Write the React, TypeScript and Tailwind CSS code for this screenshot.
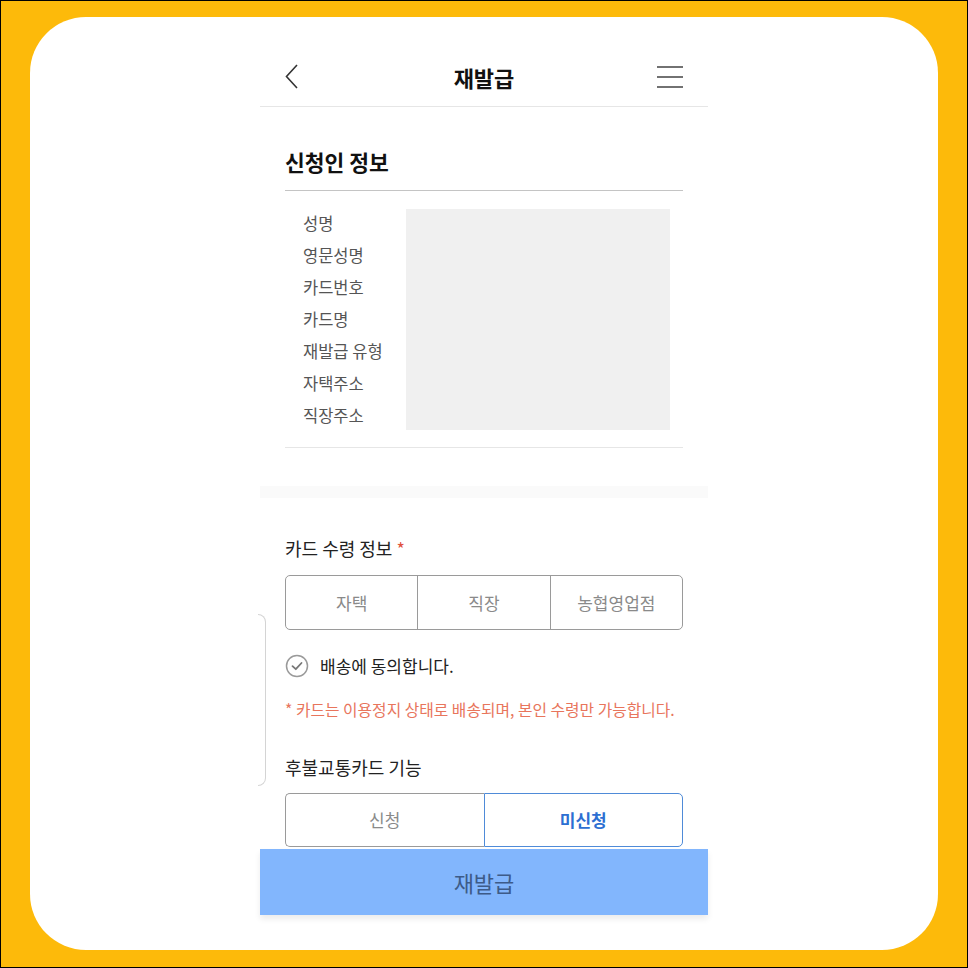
import React from 'react';

const font = { fontFamily: '"Noto Sans CJK KR", "Noto Sans", sans-serif' };

const labels = ['성명', '영문성명', '카드번호', '카드명', '재발급 유형', '자택주소', '직장주소'];

function BackIcon() {
  return (
    <svg width="14" height="26" viewBox="0 0 14 26" fill="none">
      <path d="M12 1 L1.5 12.5 L12 24" stroke="#333" strokeWidth="1.6" />
    </svg>
  );
}

function MenuIcon() {
  return (
    <svg width="26" height="24" viewBox="0 0 26 24" fill="none">
      <path d="M0 2h26M0 12h26M0 22h26" stroke="#444" strokeWidth="1.5" />
    </svg>
  );
}

function CheckCircle() {
  return (
    <svg width="24" height="24" viewBox="0 0 24 24" fill="none">
      <circle cx="12" cy="12" r="10.5" stroke="#9a9a9a" strokeWidth="1.5" />
      <path d="M7.5 12.2 L10.8 15.2 L16.5 9" stroke="#777" strokeWidth="1.8" strokeLinecap="round" strokeLinejoin="round" />
    </svg>
  );
}

export default function App() {
  return (
    <div className="w-[968px] h-[968px] bg-[#FDBA0A] border border-black" style={font}>
      <div className="relative ml-[29px] mt-[16px] w-[908px] h-[933px] bg-white rounded-[56px] pt-[30px]">
        {/* 좌측 폰 가장자리 */}
        <div className="absolute left-[228px] top-[597px] w-[8px] h-[172px] border-r border-t border-b border-[#d4d4d4] rounded-r-[8px]" />

        <div className="mx-auto w-[448px]">
          {/* 헤더 */}
          <div className="h-[60px] border-b border-[#e6e6e6] flex items-center px-[25px]">
            <div className="w-[26px] flex items-center">
              <BackIcon />
            </div>
            <div className="flex-1 text-center text-[22px] font-bold text-[#111] leading-none">재발급</div>
            <div className="w-[26px] flex items-center">
              <MenuIcon />
            </div>
          </div>

          {/* 신청인 정보 */}
          <div className="px-[25px]">
            <div className="mt-[41px] text-[21.5px] font-semibold text-[#111] leading-[28px]">신청인 정보</div>
            <div className="mt-[14px] h-px bg-[#c4c4c4]" />
            <div className="mt-[16px] flex pl-[18px] pr-[13px]">
              <div className="w-[103px] flex flex-col">
                {labels.map((l) => (
                  <div key={l} className="text-[16.5px] leading-[32px] text-[#555]">{l}</div>
                ))}
              </div>
              <div className="flex-1 mt-[2px] h-[221px] bg-[#f0f0f0]" />
            </div>
            <div className="mt-[16px] h-px bg-[#e6e6e6]" />
          </div>

          <div className="mt-[38px] h-[12px] bg-[#fafafa]" />

          {/* 카드 수령 정보 */}
          <div className="px-[25px]">
            <div className="mt-[37px] text-[18px] leading-[26px] text-[#222]">
              카드 수령 정보 <span className="text-[#e0503c]">*</span>
            </div>
            <div className="mt-[14px] h-[55px] flex border border-[#9a9a9a] rounded-[5px]">
              <div className="flex-1 flex items-center justify-center text-[17px] text-[#8a8a8a]">자택</div>
              <div className="flex-1 flex items-center justify-center text-[17px] text-[#8a8a8a] border-l border-[#9a9a9a]">직장</div>
              <div className="flex-1 flex items-center justify-center text-[17px] text-[#8a8a8a] border-l border-[#9a9a9a]">농협영업점</div>
            </div>

            <div className="mt-[24px] h-[24px] flex items-center gap-[11px]">
              <CheckCircle />
              <span className="text-[17px] text-[#222]">배송에 동의합니다.</span>
            </div>

            <div className="mt-[22px] text-[15.8px] leading-[20px] text-[#e8755c] whitespace-nowrap">
              * 카드는 이용정지 상태로 배송되며, 본인 수령만 가능합니다.
            </div>

            <div className="mt-[34px] text-[18px] leading-[26px] text-[#222]">후불교통카드 기능</div>
            <div className="mt-[13px] h-[54px] flex">
              <div className="flex-1 flex items-center justify-center text-[17px] text-[#8a8a8a] border border-r-0 border-[#9a9a9a] rounded-l-[5px]">신청</div>
              <div className="flex-1 flex items-center justify-center text-[17px] font-bold text-[#2d6fd2] border border-[#4f8bd8] rounded-r-[5px]">미신청</div>
            </div>
          </div>

          {/* 하단 버튼 */}
          <div className="mt-[2px] h-[66px] bg-[#82b6fd] flex items-center justify-center text-[22px] text-[#3d5b88] shadow-[0_4px_6px_rgba(0,0,0,0.08)]">
            재발급
          </div>
        </div>
      </div>
    </div>
  );
}
